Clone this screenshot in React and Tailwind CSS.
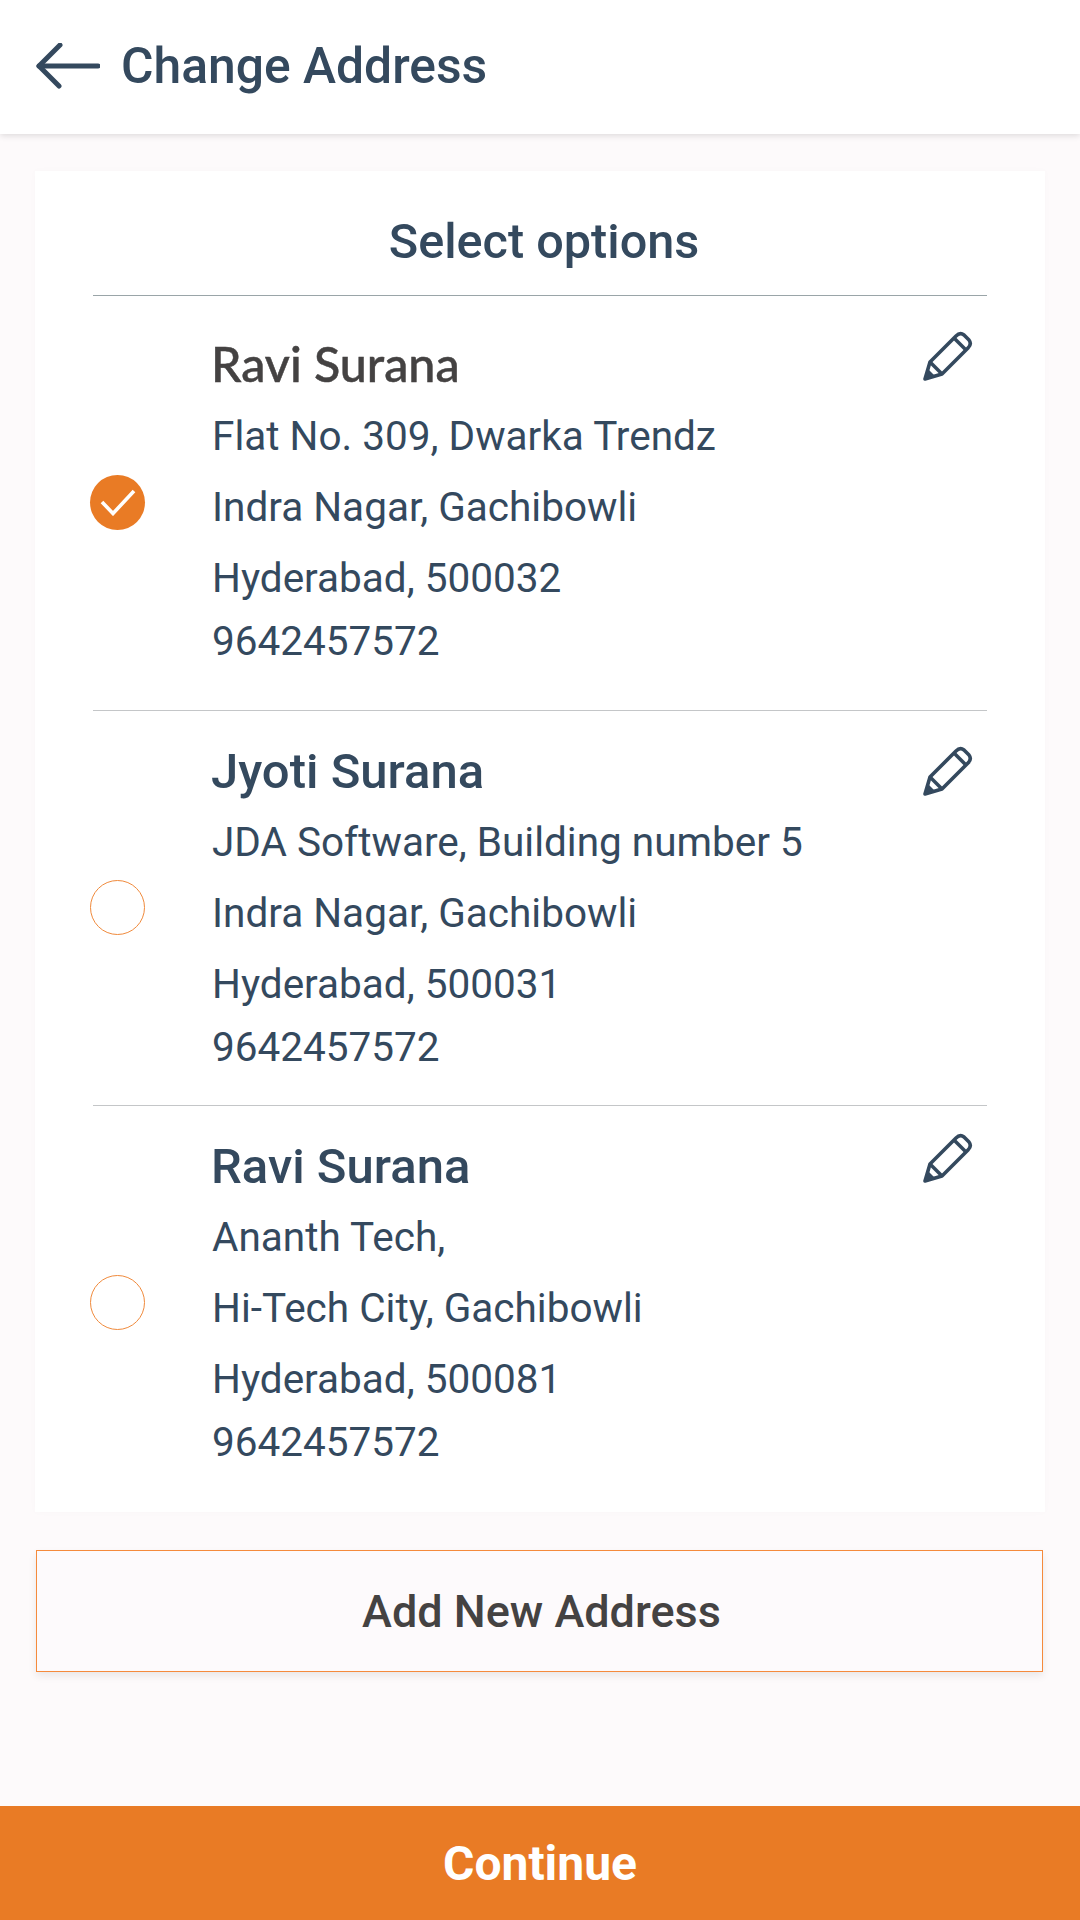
const addresses = [
  {
    name: "Ravi Surana",
    lines: ["Flat No. 309, Dwarka Trendz", "Indra Nagar, Gachibowli", "Hyderabad, 500032"],
    phone: "9642457572",
    selected: true,
    iconTop: "pt-0",
  },
  {
    name: "Jyoti Surana",
    lines: ["JDA Software, Building number 5", "Indra Nagar, Gachibowli", "Hyderabad, 500031"],
    phone: "9642457572",
    iconTop: "pt-[7px]",
  },
  {
    name: "Ravi Surana",
    lines: ["Ananth Tech,", "Hi-Tech City, Gachibowli", "Hyderabad, 500081"],
    phone: "9642457572",
    iconTop: "-mt-[1px]",
  },
];

const Radio = ({ selected }) =>
  selected ? (
    <span className="flex h-[55px] w-[55px] items-center justify-center rounded-full bg-[#e97b25]">
      <svg width="36" height="27" viewBox="0 0 36 27" fill="none">
        <path d="M2 13 L13 24.5 L34 2" stroke="#fff" strokeWidth="3.6" />
      </svg>
    </span>
  ) : (
    <span className="block h-[55px] w-[55px] rounded-full border border-[#f08a3c] bg-white" />
  );

const EditIcon = () => (
  <svg width="50" height="50" viewBox="0 0 50 50" fill="none" stroke="#34495e" strokeWidth="3.6" strokeLinejoin="round">
    <path d="M2 48 L7 31 L33 5 Q37 1 41 4 L46 9 Q49 13 45 17 L19 43 Z" />
    <path d="M7 31 L19 43" />
    <path d="M31 7 L43 19" />
    <path d="M2 48 L12 45 L5 38 Z" fill="#34495e" stroke="none" />
  </svg>
);

const AddressRow = ({ address, index }) => (
  <div className={`flex ${index === 0 ? "h-[414px] pt-[35px]" : "h-[394px] pt-[28px]"}`}>
    <div className={`flex w-[119px] shrink-0 items-center ${index === 0 ? "pb-[36px]" : "pb-[30px]"}`}>
      <div className="-ml-[3px]">
        <Radio selected={address.selected} />
      </div>
    </div>
    <div className="min-w-0 flex-1">
      <p
        className={
          address.selected
            ? "-ml-[1px] h-[70px] font-['Lato'] text-[48.4px] leading-[65px] font-medium text-[#444242] [-webkit-text-stroke:0.5px_#444242]"
            : "-ml-[1px] h-[68px] text-[49px] leading-[65px] font-medium text-[#34495e]"
        }
      >
        {address.name}
      </p>
      {address.lines.map((line) => (
        <p key={line} className="h-[71px] text-[40.5px] leading-[71px] text-[#34495e]">
          {line}
        </p>
      ))}
      <p className="text-[40.5px] leading-[55px] text-[#34495e]">{address.phone}</p>
    </div>
    <div className={`shrink-0 pr-[14px] ${address.iconTop}`}>
      <EditIcon />
    </div>
  </div>
);

export default function App() {
  return (
    <div className="relative flex h-[1920px] w-[1080px] flex-col overflow-hidden bg-[#fdfafb] font-['Roboto',sans-serif]">
      <header className="flex h-[134px] shrink-0 items-center bg-white pb-[2px] pl-[36px] shadow-[0_2px_6px_rgba(0,0,0,0.12)]">
        <svg width="64" height="46" viewBox="0 0 64 46" fill="none" stroke="#34495e" strokeWidth="5" strokeLinecap="round" strokeLinejoin="round">
          <path d="M24 2 L3 23 L23 43" />
          <path d="M3 23 H62" />
        </svg>
        <h1 className="ml-[21px] text-[49.8px] font-medium text-[#34495e]">Change Address</h1>
      </header>

      <main className="flex-1 pt-[37px] pr-[35px] pl-[35px]">
        <section className="h-[1341px] bg-white px-[58px] shadow-[0_0_8px_rgba(0,0,0,0.02)]">
          <h2 className="h-[125px] border-b border-[#9aa5a8] pt-[41px] pl-[8px] text-center text-[48.6px] leading-[60px] font-medium text-[#34495e]">
            Select options
          </h2>
          {addresses.map((address, index) => (
            <div key={index} className={index > 0 ? "border-t border-[#c4c6c8]" : ""}>
              <AddressRow address={address} index={index} />
            </div>
          ))}
        </section>

        <button className="mt-[38px] ml-[1px] h-[122px] w-[1007px] border border-[#f58a3c] bg-[#fdfafc] pt-[2px] pl-[4px] text-center text-[45px] font-medium text-[#444242] shadow-[0_4px_8px_rgba(0,0,0,0.08)]">
          Add New Address
        </button>
      </main>

      <button className="h-[114px] shrink-0 bg-[#e97b25] pt-[2px] text-center text-[48px] font-bold text-white">
        Continue
      </button>
    </div>
  );
}
